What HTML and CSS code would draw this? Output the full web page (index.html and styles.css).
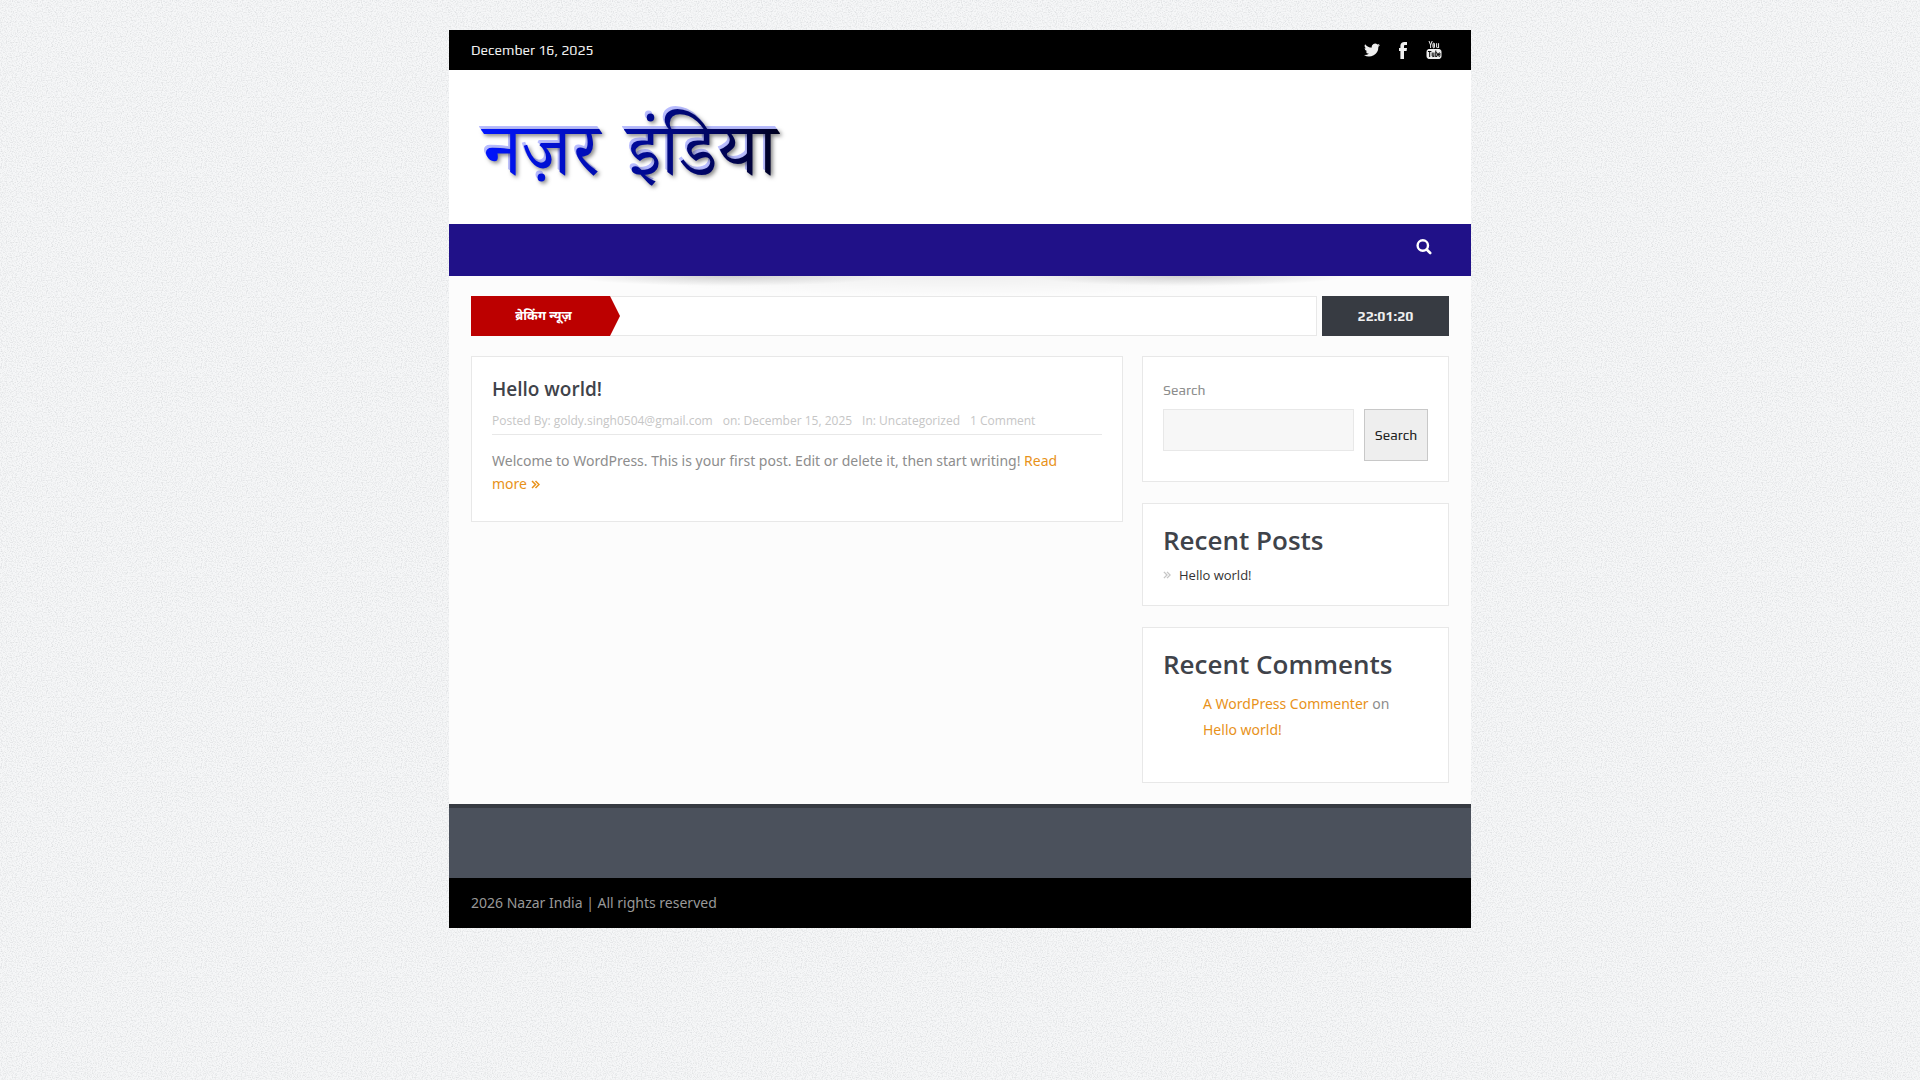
FILE: index.html
```html
<!DOCTYPE html>
<html lang="en">
<head>
  <meta charset="utf-8">
  <title>Nazar India</title>
  <link rel="stylesheet" href="styles.css">
</head>
<body>
  <div class="boxed">
    <div class="top-bar">
      <span class="date">December 16, 2025</span>
      <ul class="social">
        <li><a href="#" aria-label="Twitter">
          <svg width="16" height="16" viewBox="0 0 24 24"><path d="M24 4.6a10 10 0 0 1-2.8.8 5 5 0 0 0 2.1-2.7c-1 .6-2 1-3.1 1.2a4.9 4.9 0 0 0-8.4 4.5A14 14 0 0 1 1.7 3.2a4.9 4.9 0 0 0 1.5 6.5 4.9 4.9 0 0 1-2.2-.6 4.9 4.9 0 0 0 3.9 4.9 4.9 4.9 0 0 1-2.2.1 4.9 4.9 0 0 0 4.6 3.4A9.9 9.9 0 0 1 0 19.5 14 14 0 0 0 21.5 7.1 10 10 0 0 0 24 4.6z"/></svg>
        </a></li>
        <li><a href="#" aria-label="Facebook">
          <svg width="16" height="18" viewBox="0 0 16 18"><path d="M12 1v3h-1.600c-1.100 0-1.400.5-1.400 1.300V7h3l-.4 3H9v8H5.400v-8H4V7h1.400V4.800C5.400 2.300 7 .9 9.500.9c1.100 0 2.100.1 2.500.1z"/></svg>
        </a></li>
        <li><a href="#" aria-label="YouTube">
          <svg width="16" height="18" viewBox="0 0 16 18" fill="none" stroke="#efefef"><path d="M3 0l1.600 4v3M6.200 0L4.600 4M8 2.500v3.900M6.900 3.200v2.600q0 1 .8 1t.8-1V3.200q0-1-.8-1t-.8 1M10.600 2.200v3.800q0 .9 1 .6l1-.8M12.600 2.200V7"/><rect x="1" y="8.500" width="14" height="9" rx="2" fill="#efefef"/><path stroke="#000" d="M2 10.500h3.400M3.700 10.500V16M6.200 11.500v3.600q.2 1 1.700 0M7.900 11.500V16M9.800 9.500V16M9.800 12q1.600-.8 1.600.5v2q0 1.500-1.600.7M14 14.300q0 1.200-.7 1.200t-.7-1v-1.700q0-1 .7-1t.7 1v.9h-1.400"/></svg>
        </a></li>
      </ul>
    </div>

    <header class="header">
      <a href="#" class="logo">
        <svg width="324" height="90" viewBox="0 0 324 90" role="img" aria-label="नज़र इंडिया">
          <defs>
            <linearGradient id="logo-fill" gradientUnits="userSpaceOnUse" x1="10" y1="0" x2="324" y2="0">
              <stop offset="0" stop-color="#0014ff"/>
              <stop offset=".5" stop-color="#000a98"/>
              <stop offset=".8" stop-color="#000350"/>
              <stop offset="1" stop-color="#000010"/>
            </linearGradient>
          </defs>
          <g class="logo-light" aria-hidden="true">
            <text x="11" y="70">नज़र</text>
            <text x="154" y="70">इंडिया</text>
          </g>
          <g class="logo-text" fill="url(#logo-fill)">
            <text x="13" y="73">नज़र</text>
            <text x="156" y="73">इंडिया</text>
          </g>
        </svg>
      </a>
    </header>

    <nav class="nav">
      <button class="nav-search" aria-label="Search">
        <svg width="16" height="16" viewBox="0 0 16 16" fill="none" stroke="#fff" stroke-linecap="round"><circle cx="6.800" cy="6.500" r="5.200" stroke-width="2.400"/><path d="M10.700 10.500l3.500 3.500" stroke-width="2.600"/></svg>
      </button>
    </nav>

    <div class="main">
      <div class="news">
        <div class="news-box"><span class="news-title">ब्रेकिंग न्यूज़</span></div>
        <div class="clock">22:01:20</div>
      </div>

      <div class="columns">
        <main class="content">
          <article class="card post">
            <h2><a href="#">Hello world!</a></h2>
            <div class="post-meta">
              <span>Posted By: <a href="#">goldy.singh0504@gmail.com</a></span>
              <span>on: December 15, 2025</span>
              <span>In: <a href="#">Uncategorized</a></span>
              <span><a href="#">1 Comment</a></span>
            </div>
            <p>Welcome to WordPress. This is your first post. Edit or delete it, then start writing! <a href="#">Read <span class="nowrap">more <svg class="chevrons" width="9" height="9" viewBox="0 0 9 9" stroke-width="1.500"><path d="M1 1l3.500 3.500L1 8M4.500 1L8 4.500 4.500 8"/></svg></span></a></p>
          </article>
        </main>

        <aside class="sidebar">
          <form class="card search-form">
            <label for="search">Search</label>
            <div class="search-row">
              <input type="search" id="search">
              <button type="submit">Search</button>
            </div>
          </form>

          <section class="card recent-posts">
            <h2>Recent Posts</h2>
            <ul>
              <li><svg class="chevrons" width="8" height="8" viewBox="0 0 9 9" stroke-width="1.500"><path d="M1 1l3.500 3.500L1 8M4.500 1L8 4.500 4.500 8"/></svg><a href="#">Hello world!</a></li>
            </ul>
          </section>

          <section class="card recent-comments">
            <h2>Recent Comments</h2>
            <ol>
              <li><a href="#">A WordPress Commenter</a> on <a href="#" class="nowrap">Hello world!</a></li>
            </ol>
          </section>
        </aside>
      </div>
    </div>

    <footer class="footer"></footer>
    <div class="copyright">2026 Nazar India | All rights reserved</div>
  </div>
</body>
</html>
```
FILE: styles.css
```css
* {
  box-sizing: border-box;
}

body {
  margin: 0;
  padding: 30px 20px;
  background: #f6f7f8 url("data:image/svg+xml,%3Csvg xmlns='http://www.w3.org/2000/svg' width='200' height='200'%3E%3Cfilter id='n' x='0' y='0' width='1' height='1'%3E%3CfeTurbulence type='fractalNoise' baseFrequency='.8' numOctaves='2' stitchTiles='stitch'/%3E%3CfeColorMatrix values='0 0 0 0 .5 0 0 0 0 .52 0 0 0 0 .54 2.4 0 0 0 -1'/%3E%3C/filter%3E%3Crect width='200' height='200' filter='url(%23n)' opacity='.4'/%3E%3C/svg%3E");
  color: #8d8d8d;
  font: 14px/23px "Noto Sans", "Open Sans", sans-serif;
}

a {
  color: #e8921a;
  text-decoration: none;
}

h2 {
  margin: 0;
  color: #3f434a;
  font-family: "Open Sans", sans-serif;
  font-weight: 600;
}

ul,
ol {
  list-style: none;
  margin: 0;
  padding: 0;
}

.boxed {
  max-width: 1022px;
  margin: 0 auto;
  background: #fcfcfc;
}

/* top bar */
.top-bar {
  display: flex;
  justify-content: space-between;
  align-items: center;
  height: 40px;
  padding: 0 29px 0 22px;
  background: #000;
}

.date {
  color: #efefef;
  font: 14px/20px Play, "Open Sans", sans-serif;
}

.social {
  display: flex;
  gap: 15px;
}

.social a {
  display: flex;
  fill: #efefef;
}

.social li {
  display: flex;
  align-items: center;
}

/* header */
.header {
  padding: 32px 22px;
  background: #fff;
}

.logo {
  display: block;
}

.logo svg {
  display: block;
  overflow: visible;
}

.logo-text,
.logo-light {
  font: 74px "Noto Serif Devanagari", "Noto Sans Devanagari", "Noto Sans", serif;
}

.logo-light {
  fill: #b9bdff;
}

.logo-text {
  filter: drop-shadow(2px 2px 2px rgba(0, 0, 0, .5));
}

.nav {
  display: flex;
  justify-content: flex-end;
  height: 52px;
  padding: 15px 39px;
  background: #201188;
}

.nav-search {
  align-self: flex-start;
  display: flex;
  padding: 0;
  border: 0;
  background: none;
  cursor: pointer;
}

/* main */
.main {
  padding: 20px 22px 21px;
  background:
    radial-gradient(closest-side, rgba(0, 0, 0, .16), transparent) 120px -10px / 320px 20px no-repeat,
    radial-gradient(closest-side, rgba(0, 0, 0, .16), transparent) 580px -10px / 320px 20px no-repeat,
    radial-gradient(closest-side, rgba(0, 0, 0, .05), transparent) 160px -20px / 700px 40px no-repeat;
}

.news {
  display: flex;
  gap: 5px;
  height: 40px;
  margin-bottom: 20px;
}

.news-box {
  flex: 1;
  border: 1px solid #e8e8e8;
  background: #fff;
}

.news-title {
  display: block;
  width: 149px;
  height: 40px;
  margin: -1px;
  padding-right: 4px;
  background: #bc0000;
  clip-path: polygon(0 0, 139px 0, 100% 50%, 139px 100%, 0 100%);
  color: #fff;
  font: bold 13px/42px "Noto Sans Devanagari", "Noto Sans", sans-serif;
  text-align: center;
}

.clock {
  width: 127px;
  background: #373b42;
  color: #efefef;
  font: bold 14px/40px Play, "Open Sans", sans-serif;
  text-align: center;
}

.columns {
  display: flex;
  align-items: flex-start;
  gap: 19px;
}

.content {
  flex: 1;
}

.sidebar {
  display: grid;
  grid-template-columns: minmax(0, 1fr);
  gap: 21px;
  width: 307px;
}

.card {
  padding: 20px;
  border: 1px solid #e8e8e8;
  background: #fff;
}

.post h2 {
  font-size: 19px;
  line-height: 24px;
}

.post h2 a {
  color: inherit;
}

.post-meta {
  display: flex;
  gap: 10px;
  margin-top: 10px;
  padding-bottom: 3px;
  border-bottom: 1px solid #e8e8e8;
  color: #c6c6c6;
  font: 12px/20px "Open Sans", sans-serif;
}

.post-meta a {
  color: inherit;
}

.post p {
  margin: 14px 0 6px;
}

.nowrap {
  white-space: nowrap;
}

.chevrons {
  fill: none;
  stroke: currentColor;
}

.search-form label {
  display: block;
  margin-bottom: 6px;
  font: 14px/26px Play, "Open Sans", sans-serif;
}

.search-row {
  display: flex;
  align-items: flex-start;
  gap: 10px;
}

.search-row input {
  flex: 1;
  min-width: 0;
  height: 42px;
  padding: 8px;
  border: 1px solid #e8e8e8;
  background: #f7f7f7;
}

.search-row button {
  width: 64px;
  height: 52px;
  padding: 0;
  border: 1px solid #c8c8c8;
  background: #eee;
  color: #222;
  font: 14px Play, "Open Sans", sans-serif;
}

.sidebar h2 {
  font-size: 26px;
  line-height: 32px;
}

.recent-posts li {
  display: flex;
  align-items: center;
  gap: 8px;
  margin-top: 9px;
  color: #c6c6c6;
  font: 13px/20px "Open Sans", sans-serif;
}

.recent-posts a {
  color: #333;
}

.recent-comments ol {
  margin: 11px 0 19px 40px;
  line-height: 26px;
}

/* footer */
.footer {
  height: 74px;
  border-top: 4px solid #373b42;
  background: #4b515c;
}

.copyright {
  padding: 13px 22px 14px;
  background: #000;
  color: #999;
}
```
